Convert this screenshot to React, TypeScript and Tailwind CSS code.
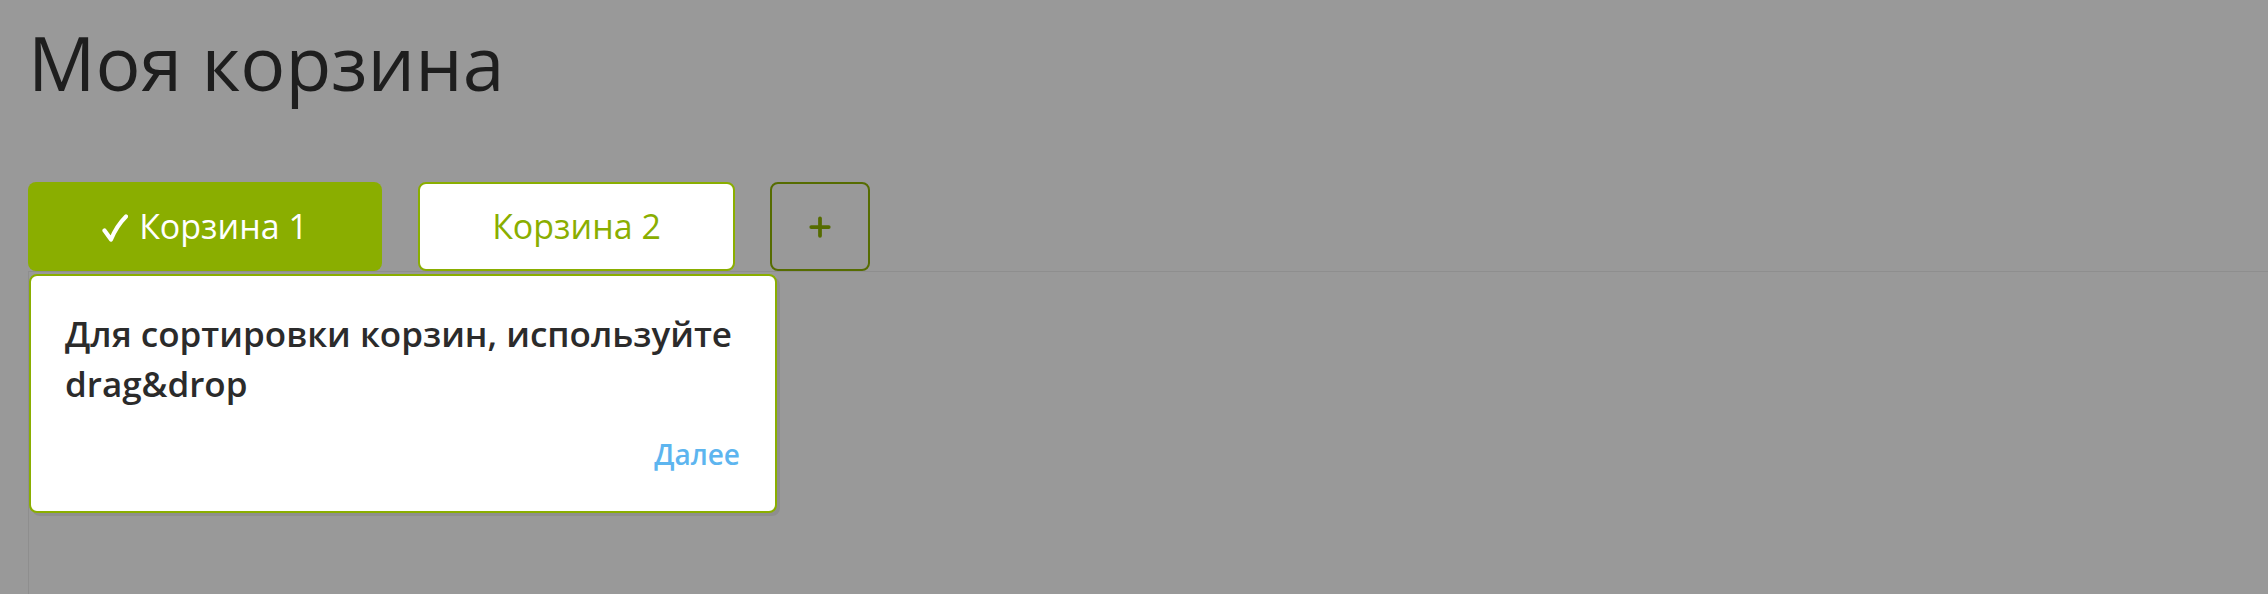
import { Plus } from 'lucide-react';

const tabs = [
  { id: 1, label: 'Корзина 1', active: true },
  { id: 2, label: 'Корзина 2', active: false },
];

function CheckMark() {
  return (
    <svg width="26" height="28" viewBox="0 0 26 28" className="mt-[2px] shrink-0">
      <path d="M2.5 16.5 L9 25.5 Q14.5 12 24 2.5" fill="none" stroke="white" strokeWidth="4.2" strokeLinecap="round" strokeLinejoin="round" />
    </svg>
  );
}

function TourHint() {
  return (
    <div className="absolute left-0 top-[2px] z-10 flex h-[239px] w-[748px] flex-col rounded-[8px] border-2 border-[#8aae00] bg-white pl-[34px] pr-[35px] pt-[33px] shadow-[3px_3px_0_rgba(0,0,0,0.07)]">
      <p className="text-[35px] font-semibold leading-[50px] text-[#2b2b2b]">
        Для сортировки корзин, используйте drag&amp;drop
      </p>
      <div className="mt-[26px] flex justify-end">
        <button className="text-[28px] font-semibold leading-[38px] text-[#5db5ef]">Далее</button>
      </div>
    </div>
  );
}

export default function App() {
  return (
    <div className="min-h-[594px] overflow-hidden bg-[#999999] pl-[28px] pt-[22px] font-['Open_Sans','DejaVu_Sans',sans-serif]">
      <h1 className="text-[75px] font-normal leading-[80px] text-[#1e1e1e]">Моя корзина</h1>

      <div className="mt-[80px] flex items-stretch gap-[36px]">
        {tabs.map((tab) =>
          tab.active ? (
            <button
              key={tab.id}
              className="flex h-[89px] w-[354px] items-center justify-center gap-[11px] rounded-[8px] bg-[#8aae00] text-[34px] text-white"
            >
              <CheckMark />
              <span>{tab.label}</span>
            </button>
          ) : (
            <button
              key={tab.id}
              className="flex h-[89px] w-[317px] items-center justify-center rounded-[8px] border-2 border-[#8aae00] bg-white text-[34px] text-[#8aae00]"
            >
              {tab.label}
            </button>
          )
        )}
        <button className="-ml-px flex h-[89px] w-[100px] items-center justify-center rounded-[8px] border-2 border-[#566c00] text-[#566c00]">
          <Plus className="h-[30px] w-[30px]" strokeWidth={3} />
        </button>
      </div>

      <div className="relative h-[330px] border-l border-t border-[#8e8e8e]">
        <TourHint />
      </div>
    </div>
  );
}
